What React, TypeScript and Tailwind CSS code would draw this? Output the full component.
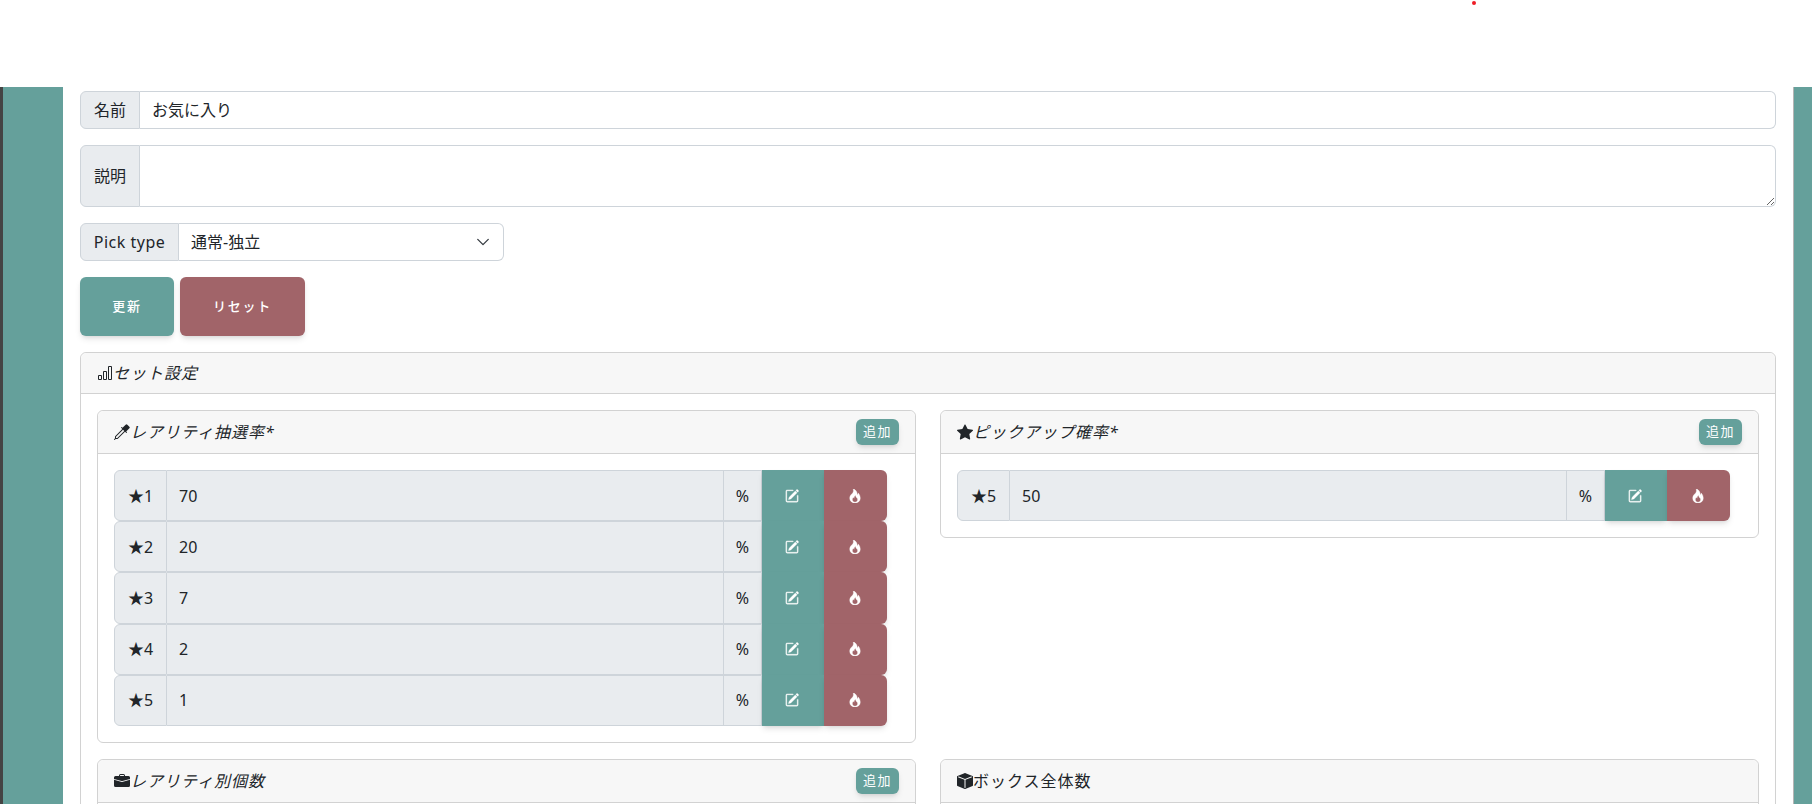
import { BsBarChart, BsBoxFill, BsBriefcaseFill, BsEyedropper, BsFire, BsPencilSquare, BsStarFill } from 'react-icons/bs';
import type { ReactNode } from 'react';

const font = { fontFamily: '"Noto Sans", "Noto Sans CJK JP", sans-serif' };

function AddButton() {
  return (
    <button className="h-[26px] w-[43px] rounded-md bg-[#65a09b] text-[13px] tracking-[1.5px] text-white shadow-md">追加</button>
  );
}

function RateRow({ rarity, value }: { rarity: number; value: number }) {
  return (
    <div className="mr-3 flex h-[51.2px]">
      <span className="flex w-[53px] shrink-0 items-center justify-center rounded-l-md border border-[#ced4da] bg-[#e9ecef] text-[#212529]">
        <span className="text-base">★</span>
        {rarity}
      </span>
      <input
        readOnly
        value={value}
        className="min-w-0 flex-1 border-y border-r border-[#ced4da] bg-[#e9ecef] px-3 text-[#212529] outline-none"
      />
      <span className="flex w-[38px] shrink-0 items-center justify-center border-y border-r border-[#ced4da] bg-[#e9ecef] text-[#212529]">%</span>
      <button className="flex w-[62px] shrink-0 items-center justify-center bg-[#65a09b] pr-0.5 text-white shadow-md">
        <BsPencilSquare className="h-[14px] w-[14px] stroke-[0.4px]" />
      </button>
      <button className="flex w-[63px] shrink-0 items-center justify-center rounded-r-md bg-[#a16469] pr-0.5 text-white shadow-md">
        <BsFire className="h-[14px] w-[14px] stroke-[0.4px]" />
      </button>
    </div>
  );
}

function SubCard({ icon, title, italic = true, add = true, children }: { icon: ReactNode; title: string; italic?: boolean; add?: boolean; children?: ReactNode }) {
  return (
    <div className="self-start rounded-md border border-[#d2d2d2]">
      <div className="flex h-[43px] items-center justify-between rounded-t-md border-b border-[#d2d2d2] bg-[#f7f7f7] px-4">
        <h3 className={`flex items-center tracking-[1px] text-[#212529] ${italic ? 'italic' : ''}`}>
          {icon}
          {title}
        </h3>
        {add && <AddButton />}
      </div>
      {children && <div className="p-4">{children}</div>}
    </div>
  );
}

export default function App() {
  return (
    <div className="relative flex h-[804px] w-full flex-col overflow-hidden bg-white" style={font}>
      <span className="absolute left-[1472px] top-[1px] h-1 w-1 rounded-full bg-[#ee1c25]" />
      <div className="h-[87px] shrink-0 bg-white" />
      <div className="flex min-h-0 flex-1">
        <div className="w-[3px] shrink-0 bg-[#444444]" />
        <div className="w-[60px] shrink-0 bg-[#65a09b]" />
        <main className="min-w-0 flex-1 bg-white px-[17px] pt-1">
          {/* 名前 */}
          <div className="flex h-[38px]">
            <span className="flex w-[60px] items-center justify-center rounded-l-md border border-[#ced4da] bg-[#e9ecef] text-[#212529]">名前</span>
            <input
              defaultValue="お気に入り"
              className="min-w-0 flex-1 rounded-r-md border-y border-r border-[#ced4da] bg-white px-3 text-[#212529] outline-none"
            />
          </div>

          {/* 説明 */}
          <div className="mt-4 flex h-[62px]">
            <span className="flex w-[60px] items-center justify-center rounded-l-md border border-[#ced4da] bg-[#e9ecef] text-[#212529]">説明</span>
            <textarea className="min-w-0 flex-1 rounded-r-md border-y border-r border-[#ced4da] bg-white px-3 py-1.5 text-[#212529] outline-none" />
          </div>

          {/* Pick type */}
          <div className="mt-4 flex h-[38px] w-[424px]">
            <span className="flex w-[99px] items-center justify-center rounded-l-md border border-[#ced4da] bg-[#e9ecef] tracking-[0.5px] text-[#212529]">Pick type</span>
            <div className="relative min-w-0 flex-1">
              <select className="h-full w-full appearance-none rounded-r-md border-y border-r border-[#ced4da] bg-white pl-3 pr-9 text-[#212529] outline-none">
                <option>通常-独立</option>
              </select>
              <svg viewBox="0 0 16 16" className="pointer-events-none absolute right-[14px] top-3 h-[14px] w-[14px]" fill="none" stroke="#343a40" strokeWidth="1.5" strokeLinecap="round" strokeLinejoin="round">
                <path d="m2 5 6 6 6-6" />
              </svg>
            </div>
          </div>

          <div className="mt-4 flex gap-1.5">
            <button className="h-[59px] w-[94px] rounded-md bg-[#65a09b] text-[13px] font-medium tracking-[1.7px] text-white shadow-md">更新</button>
            <button className="h-[59px] w-[125px] rounded-md bg-[#a16469] text-[13px] font-medium tracking-[1.7px] text-white shadow-md">リセット</button>
          </div>

          {/* セット設定 */}
          <section className="mt-4 rounded-md border border-[#d2d2d2]">
            <div className="flex h-[41px] items-center rounded-t-md border-b border-[#d2d2d2] bg-[#f7f7f7] px-4">
              <h2 className="flex items-center italic tracking-[1px] text-[#212529]">
                <BsBarChart className="h-4 w-4" />
                セット設定
              </h2>
            </div>
            <div className="grid grid-cols-2 gap-x-6 gap-y-4 p-4">
              <SubCard icon={<BsEyedropper className="h-4 w-4" />} title="レアリティ抽選率*">
                <RateRow rarity={1} value={70} />
                <RateRow rarity={2} value={20} />
                <RateRow rarity={3} value={7} />
                <RateRow rarity={4} value={2} />
                <RateRow rarity={5} value={1} />
              </SubCard>
              <SubCard icon={<BsStarFill className="h-4 w-4" />} title="ピックアップ確率*">
                <RateRow rarity={5} value={50} />
              </SubCard>
              <SubCard icon={<BsBriefcaseFill className="h-4 w-4" />} title="レアリティ別個数">
                <div className="h-10" />
              </SubCard>
              <SubCard icon={<BsBoxFill className="h-4 w-4" />} title="ボックス全体数" italic={false} add={false}>
                <div className="h-10" />
              </SubCard>
            </div>
          </section>
        </main>
        <div className="w-[19px] shrink-0 border-l border-[#b5b5b5] bg-[#65a09b]" />
      </div>
    </div>
  );
}
